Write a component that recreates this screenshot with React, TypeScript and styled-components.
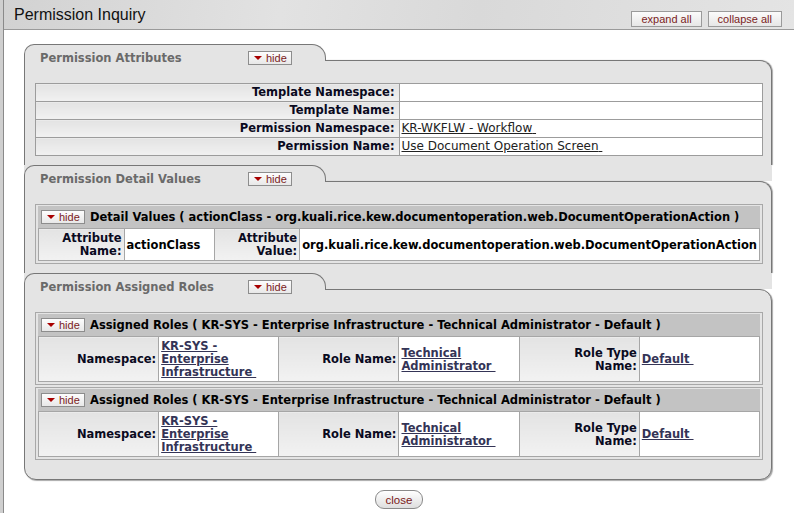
import React from "react";
import styled, { createGlobalStyle } from "styled-components";

const GlobalStyle = createGlobalStyle`
  html, body {
    margin: 0;
    padding: 0;
    background: #cfcfcf;
  }
  body {
    font-family: "DejaVu Sans", Verdana, sans-serif;
    font-size: 11.5px;
    color: #000;
  }
`;

const Page = styled.div`
  margin-left: 3px;
  border-left: 1px solid #8a8a8a;
  background: #fff;
  min-height: 513px;
`;

const Header = styled.div`
  height: 29px;
  border-bottom: 1px solid #9a9a9a;
  display: flex;
  align-items: center;
  justify-content: space-between;
  padding: 0 12px 0 10px;
  background: linear-gradient(100deg, #d2d2d2 0%, #e2e2e2 35%, #d9d9d9 60%, #e4e4e4 100%);
`;

const PageTitle = styled.h1`
  margin: 0;
  font-family: "Liberation Sans", Arial, sans-serif;
  font-size: 16px;
  font-weight: normal;
  color: #111;
`;

const HeaderButtons = styled.div`
  display: flex;
  gap: 6px;
  align-self: flex-end;
  margin-bottom: 2px;
`;

const GrayButton = styled.button`
  height: 16px;
  padding: 0 9px;
  border: 1px solid #9a9a9a;
  background: linear-gradient(#fbfbfb, #e6e6e6);
  font-family: "Liberation Sans", Arial, sans-serif;
  font-size: 11px;
  line-height: 14px;
  color: #7b1d1d;
  cursor: pointer;
`;

const Panel = styled.div`
  margin: 14px 22px 0 20px;
`;

const Section = styled.div`
  display: flex;
  flex-direction: column;
`;

const TabRow = styled.div<{ $first?: boolean }>`
  display: flex;
  align-items: flex-start;
  height: 16px;
  background: ${(p) => (p.$first ? "#fff" : "#e4e4e4")};
`;

const Tab = styled.div`
  position: relative;
  z-index: 1;
  box-sizing: border-box;
  width: 302px;
  height: 17px;
  border: 1px solid #777;
  border-bottom: 0;
  border-radius: 10px 14px 0 0;
  background: #e4e4e4;
  padding: 6px 0 0 15px;
  display: flex;
  align-items: flex-start;
`;

const TabTitle = styled.div`
  width: 208px;
  height: 14px;
  line-height: 14px;
  font-weight: bold;
  color: #6a6a6a;
  white-space: nowrap;
`;

const Body = styled.div<{ $last?: boolean }>`
  background: #e4e4e4;
  border: 1px solid #777;
  border-bottom: ${(p) => (p.$last ? "1px solid #777" : "0")};
  border-radius: ${(p) => (p.$last ? "0 12px 12px 12px" : "0 12px 0 0")};
  box-shadow: ${(p) => (p.$last ? "1px 1px 1px #aaa" : "1px 0 1px #aaa")};
  padding: 22px 8px ${(p) => (p.$last ? "19px" : "9px")} 10px;
  display: flex;
  flex-direction: column;
  gap: 2px;
`;

const HideBtn = styled.button`
  box-sizing: border-box;
  display: inline-flex;
  align-items: center;
  gap: 4px;
  width: 44px;
  height: 14px;
  padding: 0 0 0 5px;
  border: 1px solid #8d8d8d;
  background: linear-gradient(#fdfdfd, #e8e8e8);
  font-family: "Liberation Sans", Arial, sans-serif;
  font-size: 11px;
  line-height: 12px;
  color: #7b1c1c;
  cursor: pointer;
  flex-shrink: 0;
`;

const Arrow = styled.span`
  width: 0;
  height: 0;
  border-left: 4px solid transparent;
  border-right: 4px solid transparent;
  border-top: 4px solid #a80000;
`;

const AttrTable = styled.table`
  width: 100%;
  border-collapse: collapse;
  background: #fff;
  th,
  td {
    border: 1px solid #9c9c9c;
    height: 17px;
    padding: 0 4px;
    line-height: 15px;
  }
  th {
    width: 50%;
    text-align: right;
    font-weight: bold;
    color: #0a0a1e;
    background: linear-gradient(#e3e3e3, #f1f1f1);
  }
  td {
    padding-left: 2px;
    font-size: 12px;
  }
`;

const PlainLink = styled.a`
  color: #222;
  text-decoration: underline;
`;

const SubBox = styled.div`
  border: 1px solid #a8a8a8;
  padding: 1px 2px 2px 2px;
`;

const SubHeader = styled.div`
  display: flex;
  align-items: center;
  gap: 5px;
  height: 22px;
  padding-left: 3px;
  background: #c3c3c3;
  font-weight: bold;
  white-space: nowrap;
`;

const DataTable = styled.table<{ $fixed?: boolean }>`
  width: 100%;
  border-collapse: collapse;
  table-layout: ${(p) => (p.$fixed ? "fixed" : "auto")};
  th,
  td {
    border: 1px solid #a6a6a6;
    vertical-align: middle;
    line-height: 13px;
    font-weight: bold;
  }
  th {
    text-align: right;
    color: #0a0a1e;
    padding: 3px 2px 2px 4px;
    background: linear-gradient(#e3e3e3, #f2f2f2);
  }
  td {
    background: #fff;
    padding: 3px 2px 2px;
    color: #000;
  }
`;

const RoleLink = styled.a`
  color: #343456;
  text-decoration: underline;
`;

const Footer = styled.div`
  display: flex;
  justify-content: center;
  padding: 10px 0 6px;
`;

const CloseBtn = styled.button`
  height: 19px;
  width: 48px;
  border-radius: 9px;
  border: 1px solid #8a8a8a;
  background: linear-gradient(#ffffff, #dedede);
  font-family: "Liberation Sans", Arial, sans-serif;
  font-size: 11.5px;
  color: #7a1818;
  cursor: pointer;
`;

interface TabSectionProps {
  title: string;
  first?: boolean;
  last?: boolean;
  children: React.ReactNode;
}

const Hide = () => (
  <HideBtn>
    <Arrow />
    hide
  </HideBtn>
);

const TabSection = ({ title, first, last, children }: TabSectionProps) => (
  <Section>
    <TabRow $first={first}>
      <Tab>
        <TabTitle>{title}</TabTitle>
        <Hide />
      </Tab>
    </TabRow>
    <Body $last={last}>{children}</Body>
  </Section>
);

const attributes = [
  { label: "Template Namespace:", value: "" },
  { label: "Template Name:", value: "" },
  { label: "Permission Namespace:", value: "KR-WKFLW - Workflow" },
  { label: "Permission Name:", value: "Use Document Operation Screen" },
];

const RoleBlock = () => (
  <SubBox>
    <SubHeader>
      <Hide />
      Assigned Roles ( KR-SYS - Enterprise Infrastructure - Technical Administrator - Default )
    </SubHeader>
    <DataTable $fixed>
      <tbody>
        <tr>
          <th>Namespace:</th>
          <td>
            <RoleLink href="#">KR-SYS - Enterprise Infrastructure&nbsp;</RoleLink>
          </td>
          <th>Role Name:</th>
          <td>
            <RoleLink href="#">Technical Administrator&nbsp;</RoleLink>
          </td>
          <th>
            Role Type
            <br />
            Name:
          </th>
          <td>
            <RoleLink href="#">Default&nbsp;</RoleLink>
          </td>
        </tr>
      </tbody>
    </DataTable>
  </SubBox>
);

export default function App() {
  return (
    <>
      <GlobalStyle />
      <Page>
        <Header>
          <PageTitle>Permission Inquiry</PageTitle>
          <HeaderButtons>
            <GrayButton>expand all</GrayButton>
            <GrayButton>collapse all</GrayButton>
          </HeaderButtons>
        </Header>
        <Panel>
          <TabSection title="Permission Attributes" first>
            <AttrTable>
              <tbody>
                {attributes.map((a) => (
                  <tr key={a.label}>
                    <th>{a.label}</th>
                    <td>
                      {a.value && <PlainLink href="#">{a.value}&nbsp;</PlainLink>}
                    </td>
                  </tr>
                ))}
              </tbody>
            </AttrTable>
          </TabSection>
          <TabSection title="Permission Detail Values">
            <SubBox>
              <SubHeader>
                <Hide />
                Detail Values ( actionClass - org.kuali.rice.kew.documentoperation.web.DocumentOperationAction )
              </SubHeader>
              <DataTable>
                <tbody>
                  <tr>
                    <th style={{ width: 80 }}>Attribute Name:</th>
                    <td style={{ width: 86 }}>actionClass</td>
                    <th style={{ width: 80 }}>Attribute Value:</th>
                    <td>org.kuali.rice.kew.documentoperation.web.DocumentOperationAction</td>
                  </tr>
                </tbody>
              </DataTable>
            </SubBox>
          </TabSection>
          <TabSection title="Permission Assigned Roles" last>
            <RoleBlock />
            <RoleBlock />
          </TabSection>
        </Panel>
        <Footer>
          <CloseBtn>close</CloseBtn>
        </Footer>
      </Page>
    </>
  );
}
